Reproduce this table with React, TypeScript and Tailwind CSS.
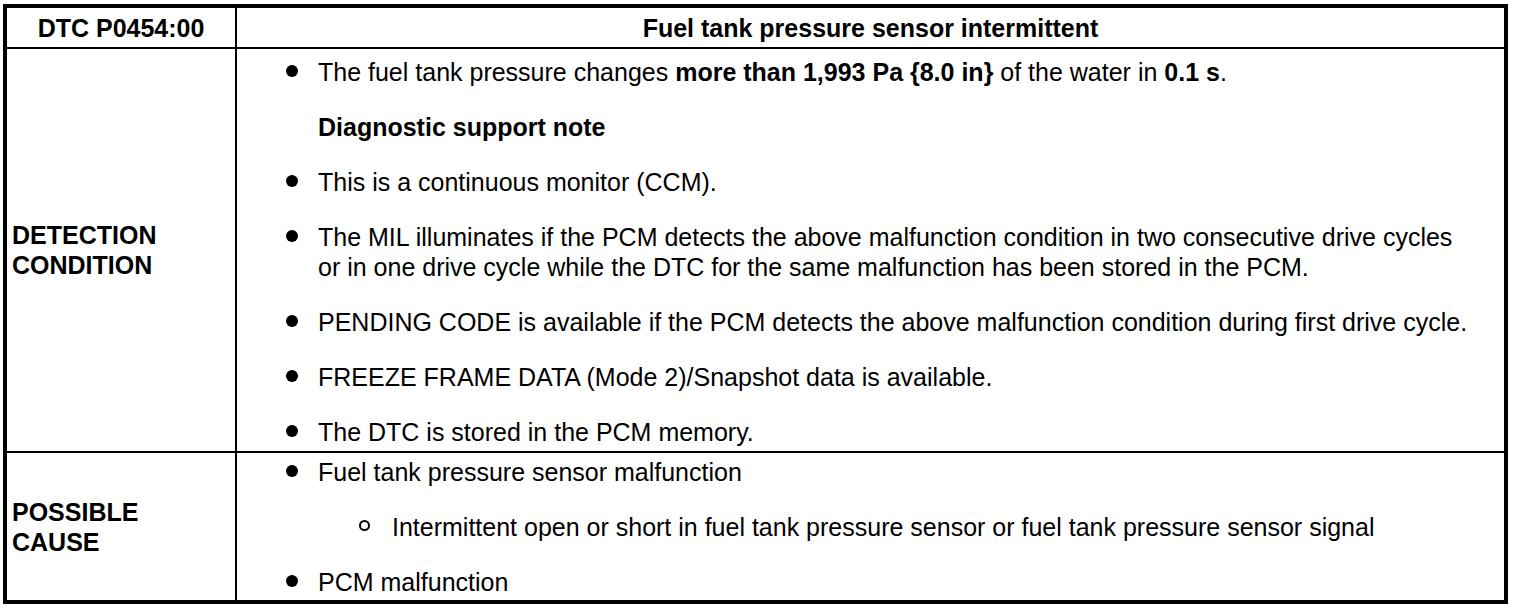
import React from 'react';

type Item = {
  kind: 'bullet' | 'sub' | 'note';
  content: React.ReactNode;
};

const detection: Item[] = [
  {
    kind: 'bullet',
    content: (
      <>
        The fuel tank pressure changes <b>more than 1,993 Pa {'{8.0 in}'}</b> of the water in <b>0.1 s</b>.
      </>
    ),
  },
  { kind: 'note', content: <b>Diagnostic support note</b> },
  { kind: 'bullet', content: 'This is a continuous monitor (CCM).' },
  {
    kind: 'bullet',
    content: (
      <>
        The MIL illuminates if the PCM detects the above malfunction condition in two consecutive drive cycles
        <br />
        or in one drive cycle while the DTC for the same malfunction has been stored in the PCM.
      </>
    ),
  },
  {
    kind: 'bullet',
    content: 'PENDING CODE is available if the PCM detects the above malfunction condition during first drive cycle.',
  },
  { kind: 'bullet', content: 'FREEZE FRAME DATA (Mode 2)/Snapshot data is available.' },
  { kind: 'bullet', content: 'The DTC is stored in the PCM memory.' },
];

const causes: Item[] = [
  { kind: 'bullet', content: 'Fuel tank pressure sensor malfunction' },
  {
    kind: 'sub',
    content: 'Intermittent open or short in fuel tank pressure sensor or fuel tank pressure sensor signal',
  },
  { kind: 'bullet', content: 'PCM malfunction' },
];

function Row({ item }: { item: Item }) {
  if (item.kind === 'note') {
    return <div className="pl-[32px] whitespace-nowrap">{item.content}</div>;
  }
  const sub = item.kind === 'sub';
  return (
    <div className={`flex ${sub ? 'ml-[73px]' : ''}`}>
      <span className={`flex h-[30px] shrink-0 items-center pb-[3px] ${sub ? 'w-[33px]' : 'w-[32px]'}`}>
        {sub ? (
          <span className="block h-[11px] w-[11px] shrink-0 rounded-full border-[2.5px] border-black" />
        ) : (
          <span className="block h-[12px] w-[12px] shrink-0 rounded-full bg-black" />
        )}
      </span>
      <span className="whitespace-nowrap">{item.content}</span>
    </div>
  );
}

function App() {
  return (
    <div className="min-h-screen bg-white pl-[3px] pt-[4px] text-black">
      <div className="w-[1505px] border-4 border-black font-['Liberation_Sans',Arial,sans-serif] text-[25px] leading-[30px]">
        <div className="grid grid-cols-[230px_1fr]">
          {/* header */}
          <div className="flex h-[41px] items-center justify-center border-r-2 border-b-2 border-black font-bold">
            DTC P0454:00
          </div>
          <div className="flex h-[41px] items-center justify-center border-b-2 border-black font-bold">
            Fuel tank pressure sensor intermittent
          </div>

          {/* detection condition */}
          <div className="flex items-center border-r-2 border-b-2 border-black pl-[5px] font-bold">
            DETECTION
            <br />
            CONDITION
          </div>
          <div className="flex flex-col gap-[25px] border-b-2 border-black pt-[8px] pb-[4px] pl-[49px]">
            {detection.map((item, i) => (
              <Row key={i} item={item} />
            ))}
          </div>

          {/* possible cause */}
          <div className="flex items-center border-r-2 border-black pl-[5px] font-bold">
            POSSIBLE
            <br />
            CAUSE
          </div>
          <div className="flex flex-col gap-[25px] pt-[4px] pb-[3px] pl-[49px]">
            {causes.map((item, i) => (
              <Row key={i} item={item} />
            ))}
          </div>
        </div>
      </div>
    </div>
  );
}

export default App;
